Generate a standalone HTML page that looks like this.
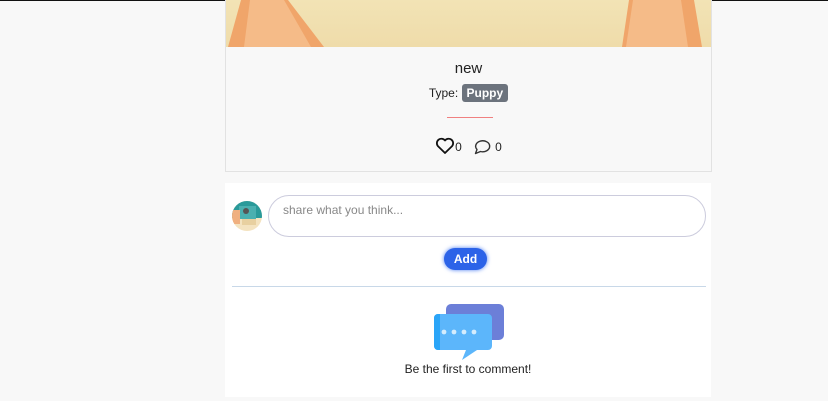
<!DOCTYPE html>
<html><head><style>
body{margin:0;width:828px;height:401px;background:#f8f8f8;font-family:"Liberation Sans",sans-serif;position:relative;overflow:hidden}
.top{position:absolute;left:0;top:0;width:828px;height:1px;background:#111}
.card{position:absolute;left:225px;top:0;width:485px;height:171px;border:1px solid #e2e2e2;border-top:none;background:#f8f8f8}
.img{position:absolute;left:0;top:0;width:485px;height:47px;background:linear-gradient(#f2e3b5,#efdcaa);overflow:hidden}
.t{position:absolute;width:485px;text-align:center;left:0}
.badge{background:#6c737d;color:#fff;font-weight:bold;font-size:12px;padding:2px 5px;border-radius:3px}
.cbox{position:absolute;left:225px;top:183px;width:486px;height:214px;background:#fff}
.ta{position:absolute;left:43px;top:12px;font-size:12px;color:#888;padding:7px 0 0 14px;box-sizing:border-box;height:42px;width:438px;border:1px solid #ccd;border-radius:22px}
.add{position:absolute;left:219px;top:65px;width:43px;height:22px;background:#2c63e8;border-radius:11px;color:#fff;font-weight:bold;font-size:12px;text-align:center;line-height:22px;box-shadow:0 0 4px #4a7cf2}
</style></head><body>
<div class="top"></div>
<div class="card">
<div class="img">
<svg width="485" height="47"><path d="M2 47 L15 0 L62 0 L98 47Z" fill="#f0a56a"/><path d="M18 47 L24 0 L58 0 L85 47Z" fill="#f5bb88"/><path d="M396 47 L403 0 L468 0 L476 47Z" fill="#f0a56a"/><path d="M400 47 L407 0 L455 0 L462 47Z" fill="#f5bb88"/></svg>
</div>
<div class="t" style="top:60px;font-size:15px;color:#222">new</div>
<div class="t" style="top:86px;font-size:12px;color:#222">Type: <span class="badge">Puppy</span></div>
<div style="position:absolute;left:221px;top:117px;width:46px;height:1px;background:#f08080"></div>
<div class="t" style="top:137px;font-size:12px;color:#222">
<svg width="20" height="18" viewBox="0 0 20 18" style="vertical-align:-4px"><path d="M10 16 L2.8 9 A4.3 4.3 0 0 1 10 3.5 A4.3 4.3 0 0 1 17.2 9Z" fill="none" stroke="#111" stroke-width="1.8" stroke-linejoin="round"/></svg>0 &nbsp;
<svg width="20" height="18" viewBox="0 0 20 18" style="vertical-align:-5px"><path d="M3.5 15.5 L5 11.5 A7 5.5 0 1 1 8.5 13.5 Z" fill="none" stroke="#333" stroke-width="1.4" stroke-linejoin="round"/></svg> 0</div>
</div>
<div class="cbox">
<svg style="position:absolute;left:7px;top:18px" width="31" height="30"><defs><clipPath id="c"><circle cx="15" cy="15" r="15"/></clipPath></defs><g clip-path="url(#c)"><rect width="31" height="30" fill="#f4e3c0"/><rect width="31" height="17" fill="#2a9a9a"/><rect x="7" y="5" width="17" height="13" fill="#4ab0b0"/><circle cx="14" cy="10" r="3" fill="#555"/><rect x="0" y="9" width="8" height="14" fill="#f0b080"/><rect x="10" y="18" width="14" height="6" fill="#e8d0a0"/></g></svg>
<div class="ta">share what you think...</div>
<div class="add">Add</div>
<div style="position:absolute;left:7px;top:103px;width:474px;height:1px;background:#c8d8e8"></div>
<svg style="position:absolute;left:208px;top:120px" width="72" height="58"><rect x="13" y="1" width="58" height="36" rx="5" fill="#6c7fd8"/><path d="M5 11 H55 a4 4 0 0 1 4 4 V43 a4 4 0 0 1-4 4 H44 L29 57 L33 47 H5 a4 4 0 0 1-4-4 V15 a4 4 0 0 1 4-4Z" fill="#5cb6fb"/><path d="M5 11 H7 V47 H5 a4 4 0 0 1-4-4 V15 a4 4 0 0 1 4-4Z" fill="#2aa5f8"/><g fill="#d4ecfd"><circle cx="11" cy="29" r="2.4"/><circle cx="21" cy="29" r="2.4"/><circle cx="31" cy="29" r="2.4"/><circle cx="41" cy="29" r="2.4"/></g></svg>
<div style="position:absolute;left:0;width:486px;top:179px;text-align:center;font-size:12px;color:#222">Be the first to comment!</div>
</div>
</body></html>
